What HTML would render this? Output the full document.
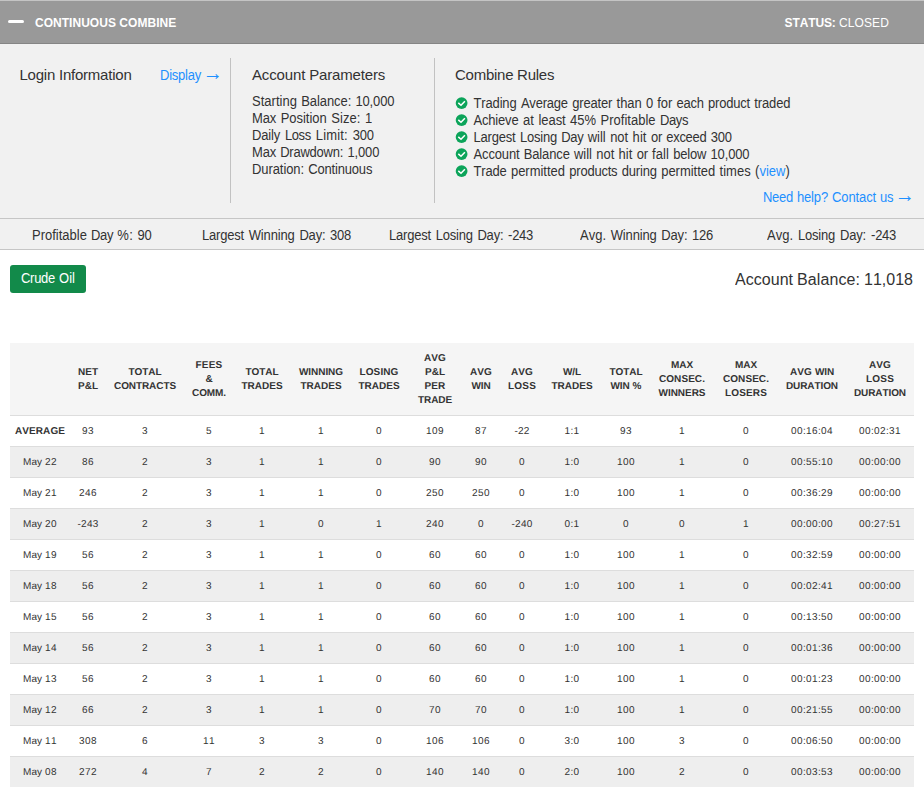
<!DOCTYPE html>
<html lang="en">
<head>
<meta charset="utf-8">
<title>Continuous Combine</title>
<style>
html,body{margin:0;padding:0;background:#fff;}
body{font-kerning:none;width:924px;height:806px;overflow:hidden;position:relative;font-family:"Liberation Sans",sans-serif;color:#333;}
.bar{position:absolute;left:0;top:0;width:924px;height:42px;background:#999;border-top:1px solid #c4c4c4;border-bottom:1px solid #858585;}
.bar .minus{position:absolute;left:8px;top:19px;width:16px;height:3px;border-radius:2px;background:#fff;}
.bar .title{position:absolute;left:35px;top:1px;line-height:42px;font-size:12px;font-weight:bold;color:#fff;}
.bar .status{position:absolute;right:35px;top:1px;line-height:42px;font-size:12px;color:#fff;}
.bar .status b{font-weight:bold;}
.info{position:absolute;left:0;top:44px;width:924px;height:174px;background:#f1f1f1;border-bottom:1px solid #c6c6c6;}
.stats{position:absolute;left:0;top:219px;width:924px;height:30px;background:#f1f1f1;border-bottom:1px solid #c6c6c6;}
.stats > span{top:7.6px;}
.vline{position:absolute;top:14px;width:1px;height:145px;background:#c2c2c2;}
h3{position:absolute;margin:0;font-weight:normal;font-size:15px;line-height:18px;color:#333;white-space:nowrap;}
a{color:#1e90ff;text-decoration:none;}
.arr{font-size:20px;line-height:0;position:relative;top:0.3px;margin-left:-2px;}
.lines{position:absolute;}
.ln{position:absolute;left:0;font-size:13px;line-height:15px;white-space:nowrap;transform:scaleY(1.075);transform-origin:0 0;}
.rules .ln{left:18.5px;}
.chks{position:absolute;left:455px;top:51px;}
.chk{position:absolute;left:0;width:13px;height:14px;}
.btn{position:absolute;left:10px;top:265px;width:76px;height:28px;line-height:27px;background:#128a4a;color:#fff;border-radius:3px;text-align:center;font-size:13px;}
.bal{position:absolute;right:11px;top:269px;font-size:16px;line-height:22px;white-space:nowrap;transform:scaleY(1.04);transform-origin:0 16px;word-spacing:-0.45px;}
.btn span{display:inline-block;transform:scaleY(1.075);transform-origin:0 18px;word-spacing:0.39px;}
table{text-rendering:geometricPrecision;position:absolute;left:10px;top:343px;border-collapse:collapse;table-layout:fixed;width:904px;}
th{background:#f5f5f5;font-size:10px;line-height:14px;word-spacing:0.22px;font-weight:bold;color:#333;height:70px;padding:2px 0 0 0;text-align:center;vertical-align:middle;}
td{font-size:10px;height:30px;padding:0;text-align:center;vertical-align:middle;border-top:1px solid #ddd;color:#333;}
th:last-child,td:last-child{padding-left:4px;}
tr.odd td{background:#eee;}
tr.avg td:first-child{font-weight:bold;}
</style>
</head>
<body>
<div class="bar">
  <div class="minus"></div>
  <div class="title"><span style="letter-spacing:0.03px">CONTINUOUS</span> <span style="letter-spacing:0.05px">COMBINE</span></div>
  <div class="status"><b style="letter-spacing:-0.14px;margin-left:1px">STATUS:</b> <span style="letter-spacing:0.11px">CLOSED</span></div>
</div>
<div class="info">
  <h3 style="left:19.5px;top:22px;letter-spacing:-0.23px;">Login Information</h3>
  <a class="ln" style="left:160px;top:23.1px;" href="#"><span style="letter-spacing:-0.23px">Display</span> <span class="arr">&rarr;</span></a>
  <div class="vline" style="left:230px;"></div>
  <h3 style="left:252px;top:22px;letter-spacing:-0.15px;">Account Parameters</h3>
  <div class="lines" style="left:252px;top:49px;">
    <div class="ln" id="p0" style="top:0.1px;word-spacing:0.59px"><span style="letter-spacing:0.02px">Starting</span> <span style="letter-spacing:-0.07px">Balance:</span> <span style="letter-spacing:-0.13px">10,000</span></div>
    <div class="ln" id="p1" style="top:17.1px;word-spacing:1.06px"><span style="letter-spacing:-0.19px">Max</span> <span style="letter-spacing:-0.03px">Position</span> Size: <span style="letter-spacing:-0.23px">1</span></div>
    <div class="ln" id="p2" style="top:34.1px;word-spacing:1.26px"><span style="letter-spacing:-0.18px">Daily</span> <span style="letter-spacing:-0.36px">Loss</span> <span style="letter-spacing:0.16px">Limit:</span> <span style="letter-spacing:-0.23px">300</span></div>
    <div class="ln" id="p3" style="top:51.1px;word-spacing:0.59px"><span style="letter-spacing:-0.19px">Max</span> <span style="letter-spacing:-0.23px">Drawdown:</span> <span style="letter-spacing:-0.11px">1,000</span></div>
    <div class="ln" id="p4" style="top:68.1px;word-spacing:0.59px"><span style="letter-spacing:-0.08px">Duration:</span> <span style="letter-spacing:-0.18px">Continuous</span></div>
  </div>
  <div class="vline" style="left:434px;"></div>
  <h3 style="left:455px;top:22px;letter-spacing:-0.26px;">Combine Rules</h3>
  <div class="chks"><svg class="chk" style="top:1.0px" viewBox="0 0 13 14"><circle cx="6.6" cy="7.05" r="5.9" fill="#0ca45a"/><path d="M3.3 6.85 L6 9.25 L9.9 5.15" fill="none" stroke="#fff" stroke-width="1.5"/></svg><svg class="chk" style="top:18.0px" viewBox="0 0 13 14"><circle cx="6.6" cy="7.05" r="5.9" fill="#0ca45a"/><path d="M3.3 6.85 L6 9.25 L9.9 5.15" fill="none" stroke="#fff" stroke-width="1.5"/></svg><svg class="chk" style="top:35.0px" viewBox="0 0 13 14"><circle cx="6.6" cy="7.05" r="5.9" fill="#0ca45a"/><path d="M3.3 6.85 L6 9.25 L9.9 5.15" fill="none" stroke="#fff" stroke-width="1.5"/></svg><svg class="chk" style="top:52.0px" viewBox="0 0 13 14"><circle cx="6.6" cy="7.05" r="5.9" fill="#0ca45a"/><path d="M3.3 6.85 L6 9.25 L9.9 5.15" fill="none" stroke="#fff" stroke-width="1.5"/></svg><svg class="chk" style="top:69.0px" viewBox="0 0 13 14"><circle cx="6.6" cy="7.05" r="5.9" fill="#0ca45a"/><path d="M3.3 6.85 L6 9.25 L9.9 5.15" fill="none" stroke="#fff" stroke-width="1.5"/></svg></div>
  <div class="lines rules" style="left:455px;top:51px;">
    <div class="ln" id="r0" style="top:0.1px;word-spacing:0.72px"><span style="letter-spacing:-0.15px">Trading</span> <span style="letter-spacing:-0.20px">Average</span> <span style="letter-spacing:-0.17px">greater</span> <span style="letter-spacing:-0.08px">than</span> <span style="letter-spacing:-0.23px">0</span> <span style="letter-spacing:-0.06px">for</span> <span style="letter-spacing:-0.30px">each</span> <span style="letter-spacing:-0.19px">product</span> <span style="letter-spacing:-0.14px">traded</span></div>
    <div class="ln" id="r1" style="top:17.1px;word-spacing:0.89px"><span style="letter-spacing:-0.18px">Achieve</span> <span style="letter-spacing:0.08px">at</span> <span style="letter-spacing:-0.09px">least</span> 45% Profitable <span style="letter-spacing:-0.40px">Days</span></div>
    <div class="ln" id="r2" style="top:34.1px;word-spacing:0.77px"><span style="letter-spacing:-0.19px">Largest</span> <span style="letter-spacing:-0.22px">Losing</span> <span style="letter-spacing:-0.37px">Day</span> will <span style="letter-spacing:-0.02px">not</span> <span style="letter-spacing:0.09px">hit</span> <span style="letter-spacing:-0.28px">or</span> <span style="letter-spacing:-0.32px">exceed</span> <span style="letter-spacing:-0.23px">300</span></div>
    <div class="ln" id="r3" style="top:51.1px;word-spacing:0.61px"><span style="letter-spacing:-0.14px">Account</span> <span style="letter-spacing:-0.14px">Balance</span> will <span style="letter-spacing:-0.02px">not</span> <span style="letter-spacing:0.09px">hit</span> <span style="letter-spacing:-0.28px">or</span> <span style="letter-spacing:0.10px">fall</span> <span style="letter-spacing:-0.19px">below</span> <span style="letter-spacing:-0.13px">10,000</span></div>
    <div class="ln" id="r4" style="top:68.1px;word-spacing:0.78px"><span style="letter-spacing:-0.19px">Trade</span> <span style="letter-spacing:-0.02px">permitted</span> <span style="letter-spacing:-0.23px">products</span> <span style="letter-spacing:-0.19px">during</span> <span style="letter-spacing:-0.02px">permitted</span> times (<a href="#">view</a>)</div>
  </div>
  <a class="ln" style="left:auto;right:9.3px;top:145.1px;" href="#"><span style="word-spacing:0.39px"><span style="letter-spacing:-0.27px">Need</span> <span style="letter-spacing:-0.16px">help?</span> <span style="letter-spacing:-0.11px">Contact</span> <span style="letter-spacing:-0.36px">us</span></span> <span class="arr">&rarr;</span></a>
</div>
<div class="stats">
  <span class="ln" id="s0" style="left:32px;word-spacing:0.56px">Profitable <span style="letter-spacing:-0.37px">Day</span> <span style="letter-spacing:0.41px">%:</span> <span style="letter-spacing:-0.23px">90</span></span>
  <span class="ln" id="s1" style="left:202px;word-spacing:1.06px"><span style="letter-spacing:-0.19px">Largest</span> <span style="letter-spacing:-0.14px">Winning</span> <span style="letter-spacing:-0.18px">Day:</span> <span style="letter-spacing:-0.23px">308</span></span>
  <span class="ln" id="s2" style="left:389px;word-spacing:1.06px"><span style="letter-spacing:-0.19px">Largest</span> <span style="letter-spacing:-0.22px">Losing</span> <span style="letter-spacing:-0.18px">Day:</span> <span style="letter-spacing:-0.25px">-243</span></span>
  <span class="ln" id="s3" style="left:580px;word-spacing:1.06px">Avg. <span style="letter-spacing:-0.14px">Winning</span> <span style="letter-spacing:-0.18px">Day:</span> <span style="letter-spacing:-0.23px">126</span></span>
  <span class="ln" id="s4" style="left:767px;word-spacing:1.39px">Avg. <span style="letter-spacing:-0.22px">Losing</span> <span style="letter-spacing:-0.18px">Day:</span> <span style="letter-spacing:-0.25px">-243</span></span>
</div>
<div class="btn"><span><span style="letter-spacing:-0.28px">Crude</span> <span style="letter-spacing:0.04px">Oil</span></span></div>
<div class="bal"><span style="letter-spacing:0.03px">Account</span> <span style="letter-spacing:0.09px">Balance:</span> 11,018</div>
<table>
<colgroup><col style="width:60px"><col style="width:36px"><col style="width:78px"><col style="width:50px"><col style="width:56px"><col style="width:62px"><col style="width:54px"><col style="width:58px"><col style="width:34px"><col style="width:48px"><col style="width:52px"><col style="width:56px"><col style="width:56px"><col style="width:72px"><col style="width:60px"><col style="width:72px"></colgroup>
<thead><tr><th></th><th>NET<br>P&amp;L</th><th><span style="letter-spacing:-0.07px">TOTAL</span><br><span style="letter-spacing:-0.09px">CONTRACTS</span></th><th><span style="letter-spacing:0.22px">FEES</span><br><span style="letter-spacing:-0.22px">&amp;</span><br><span style="letter-spacing:-0.09px">COMM.</span></th><th><span style="letter-spacing:-0.07px">TOTAL</span><br>TRADES</th><th><span style="letter-spacing:-0.06px">WINNING</span><br>TRADES</th><th><span style="letter-spacing:0.11px">LOSING</span><br>TRADES</th><th><span style="letter-spacing:0.11px">AVG</span><br>P&amp;L<br><span style="letter-spacing:0.15px">PER</span><br><span style="letter-spacing:-0.09px">TRADE</span></th><th><span style="letter-spacing:0.11px">AVG</span><br><span style="letter-spacing:-0.15px">WIN</span></th><th><span style="letter-spacing:0.11px">AVG</span><br><span style="letter-spacing:0.19px">LOSS</span></th><th><span style="letter-spacing:-0.11px">W/L</span><br>TRADES</th><th><span style="letter-spacing:-0.07px">TOTAL</span><br><span style="letter-spacing:-0.15px">WIN</span> <span style="letter-spacing:0.11px">%</span></th><th><span style="letter-spacing:-0.07px">MAX</span><br><span style="letter-spacing:0.06px">CONSEC.</span><br><span style="letter-spacing:-0.03px">WINNERS</span></th><th><span style="letter-spacing:-0.07px">MAX</span><br><span style="letter-spacing:0.06px">CONSEC.</span><br><span style="letter-spacing:0.15px">LOSERS</span></th><th><span style="letter-spacing:0.11px">AVG</span> <span style="letter-spacing:-0.15px">WIN</span><br><span style="letter-spacing:-0.10px">DURATION</span></th><th><span style="letter-spacing:0.11px">AVG</span><br><span style="letter-spacing:0.19px">LOSS</span><br><span style="letter-spacing:-0.10px">DURATION</span></th></tr></thead>
<tbody>
<tr class="avg"><td><span style="letter-spacing:0.08px">AVERAGE</span></td><td><span style="letter-spacing:0.44px">93</span></td><td><span style="letter-spacing:0.44px">3</span></td><td><span style="letter-spacing:0.44px">5</span></td><td><span style="letter-spacing:0.44px">1</span></td><td><span style="letter-spacing:0.44px">1</span></td><td><span style="letter-spacing:0.44px">0</span></td><td><span style="letter-spacing:0.44px">109</span></td><td><span style="letter-spacing:0.44px">87</span></td><td><span style="letter-spacing:0.18px">-22</span></td><td><span style="letter-spacing:0.37px">1:1</span></td><td><span style="letter-spacing:0.44px">93</span></td><td><span style="letter-spacing:0.44px">1</span></td><td><span style="letter-spacing:0.44px">0</span></td><td><span style="letter-spacing:0.38px">00:16:04</span></td><td><span style="letter-spacing:0.38px">00:02:31</span></td></tr>
<tr class="odd"><td><span style="letter-spacing:0.04px">May</span> <span style="letter-spacing:0.44px">22</span></td><td><span style="letter-spacing:0.44px">86</span></td><td><span style="letter-spacing:0.44px">2</span></td><td><span style="letter-spacing:0.44px">3</span></td><td><span style="letter-spacing:0.44px">1</span></td><td><span style="letter-spacing:0.44px">1</span></td><td><span style="letter-spacing:0.44px">0</span></td><td><span style="letter-spacing:0.44px">90</span></td><td><span style="letter-spacing:0.44px">90</span></td><td><span style="letter-spacing:0.44px">0</span></td><td><span style="letter-spacing:0.37px">1:0</span></td><td><span style="letter-spacing:0.44px">100</span></td><td><span style="letter-spacing:0.44px">1</span></td><td><span style="letter-spacing:0.44px">0</span></td><td><span style="letter-spacing:0.38px">00:55:10</span></td><td><span style="letter-spacing:0.38px">00:00:00</span></td></tr>
<tr class="even"><td><span style="letter-spacing:0.04px">May</span> <span style="letter-spacing:0.44px">21</span></td><td><span style="letter-spacing:0.44px">246</span></td><td><span style="letter-spacing:0.44px">2</span></td><td><span style="letter-spacing:0.44px">3</span></td><td><span style="letter-spacing:0.44px">1</span></td><td><span style="letter-spacing:0.44px">1</span></td><td><span style="letter-spacing:0.44px">0</span></td><td><span style="letter-spacing:0.44px">250</span></td><td><span style="letter-spacing:0.44px">250</span></td><td><span style="letter-spacing:0.44px">0</span></td><td><span style="letter-spacing:0.37px">1:0</span></td><td><span style="letter-spacing:0.44px">100</span></td><td><span style="letter-spacing:0.44px">1</span></td><td><span style="letter-spacing:0.44px">0</span></td><td><span style="letter-spacing:0.38px">00:36:29</span></td><td><span style="letter-spacing:0.38px">00:00:00</span></td></tr>
<tr class="odd"><td><span style="letter-spacing:0.04px">May</span> <span style="letter-spacing:0.44px">20</span></td><td><span style="letter-spacing:0.25px">-243</span></td><td><span style="letter-spacing:0.44px">2</span></td><td><span style="letter-spacing:0.44px">3</span></td><td><span style="letter-spacing:0.44px">1</span></td><td><span style="letter-spacing:0.44px">0</span></td><td><span style="letter-spacing:0.44px">1</span></td><td><span style="letter-spacing:0.44px">240</span></td><td><span style="letter-spacing:0.44px">0</span></td><td><span style="letter-spacing:0.25px">-240</span></td><td><span style="letter-spacing:0.37px">0:1</span></td><td><span style="letter-spacing:0.44px">0</span></td><td><span style="letter-spacing:0.44px">0</span></td><td><span style="letter-spacing:0.44px">1</span></td><td><span style="letter-spacing:0.38px">00:00:00</span></td><td><span style="letter-spacing:0.38px">00:27:51</span></td></tr>
<tr class="even"><td><span style="letter-spacing:0.04px">May</span> <span style="letter-spacing:0.44px">19</span></td><td><span style="letter-spacing:0.44px">56</span></td><td><span style="letter-spacing:0.44px">2</span></td><td><span style="letter-spacing:0.44px">3</span></td><td><span style="letter-spacing:0.44px">1</span></td><td><span style="letter-spacing:0.44px">1</span></td><td><span style="letter-spacing:0.44px">0</span></td><td><span style="letter-spacing:0.44px">60</span></td><td><span style="letter-spacing:0.44px">60</span></td><td><span style="letter-spacing:0.44px">0</span></td><td><span style="letter-spacing:0.37px">1:0</span></td><td><span style="letter-spacing:0.44px">100</span></td><td><span style="letter-spacing:0.44px">1</span></td><td><span style="letter-spacing:0.44px">0</span></td><td><span style="letter-spacing:0.38px">00:32:59</span></td><td><span style="letter-spacing:0.38px">00:00:00</span></td></tr>
<tr class="odd"><td><span style="letter-spacing:0.04px">May</span> <span style="letter-spacing:0.44px">18</span></td><td><span style="letter-spacing:0.44px">56</span></td><td><span style="letter-spacing:0.44px">2</span></td><td><span style="letter-spacing:0.44px">3</span></td><td><span style="letter-spacing:0.44px">1</span></td><td><span style="letter-spacing:0.44px">1</span></td><td><span style="letter-spacing:0.44px">0</span></td><td><span style="letter-spacing:0.44px">60</span></td><td><span style="letter-spacing:0.44px">60</span></td><td><span style="letter-spacing:0.44px">0</span></td><td><span style="letter-spacing:0.37px">1:0</span></td><td><span style="letter-spacing:0.44px">100</span></td><td><span style="letter-spacing:0.44px">1</span></td><td><span style="letter-spacing:0.44px">0</span></td><td><span style="letter-spacing:0.38px">00:02:41</span></td><td><span style="letter-spacing:0.38px">00:00:00</span></td></tr>
<tr class="even"><td><span style="letter-spacing:0.04px">May</span> <span style="letter-spacing:0.44px">15</span></td><td><span style="letter-spacing:0.44px">56</span></td><td><span style="letter-spacing:0.44px">2</span></td><td><span style="letter-spacing:0.44px">3</span></td><td><span style="letter-spacing:0.44px">1</span></td><td><span style="letter-spacing:0.44px">1</span></td><td><span style="letter-spacing:0.44px">0</span></td><td><span style="letter-spacing:0.44px">60</span></td><td><span style="letter-spacing:0.44px">60</span></td><td><span style="letter-spacing:0.44px">0</span></td><td><span style="letter-spacing:0.37px">1:0</span></td><td><span style="letter-spacing:0.44px">100</span></td><td><span style="letter-spacing:0.44px">1</span></td><td><span style="letter-spacing:0.44px">0</span></td><td><span style="letter-spacing:0.38px">00:13:50</span></td><td><span style="letter-spacing:0.38px">00:00:00</span></td></tr>
<tr class="odd"><td><span style="letter-spacing:0.04px">May</span> <span style="letter-spacing:0.44px">14</span></td><td><span style="letter-spacing:0.44px">56</span></td><td><span style="letter-spacing:0.44px">2</span></td><td><span style="letter-spacing:0.44px">3</span></td><td><span style="letter-spacing:0.44px">1</span></td><td><span style="letter-spacing:0.44px">1</span></td><td><span style="letter-spacing:0.44px">0</span></td><td><span style="letter-spacing:0.44px">60</span></td><td><span style="letter-spacing:0.44px">60</span></td><td><span style="letter-spacing:0.44px">0</span></td><td><span style="letter-spacing:0.37px">1:0</span></td><td><span style="letter-spacing:0.44px">100</span></td><td><span style="letter-spacing:0.44px">1</span></td><td><span style="letter-spacing:0.44px">0</span></td><td><span style="letter-spacing:0.38px">00:01:36</span></td><td><span style="letter-spacing:0.38px">00:00:00</span></td></tr>
<tr class="even"><td><span style="letter-spacing:0.04px">May</span> <span style="letter-spacing:0.44px">13</span></td><td><span style="letter-spacing:0.44px">56</span></td><td><span style="letter-spacing:0.44px">2</span></td><td><span style="letter-spacing:0.44px">3</span></td><td><span style="letter-spacing:0.44px">1</span></td><td><span style="letter-spacing:0.44px">1</span></td><td><span style="letter-spacing:0.44px">0</span></td><td><span style="letter-spacing:0.44px">60</span></td><td><span style="letter-spacing:0.44px">60</span></td><td><span style="letter-spacing:0.44px">0</span></td><td><span style="letter-spacing:0.37px">1:0</span></td><td><span style="letter-spacing:0.44px">100</span></td><td><span style="letter-spacing:0.44px">1</span></td><td><span style="letter-spacing:0.44px">0</span></td><td><span style="letter-spacing:0.38px">00:01:23</span></td><td><span style="letter-spacing:0.38px">00:00:00</span></td></tr>
<tr class="odd"><td><span style="letter-spacing:0.04px">May</span> <span style="letter-spacing:0.44px">12</span></td><td><span style="letter-spacing:0.44px">66</span></td><td><span style="letter-spacing:0.44px">2</span></td><td><span style="letter-spacing:0.44px">3</span></td><td><span style="letter-spacing:0.44px">1</span></td><td><span style="letter-spacing:0.44px">1</span></td><td><span style="letter-spacing:0.44px">0</span></td><td><span style="letter-spacing:0.44px">70</span></td><td><span style="letter-spacing:0.44px">70</span></td><td><span style="letter-spacing:0.44px">0</span></td><td><span style="letter-spacing:0.37px">1:0</span></td><td><span style="letter-spacing:0.44px">100</span></td><td><span style="letter-spacing:0.44px">1</span></td><td><span style="letter-spacing:0.44px">0</span></td><td><span style="letter-spacing:0.38px">00:21:55</span></td><td><span style="letter-spacing:0.38px">00:00:00</span></td></tr>
<tr class="even"><td><span style="letter-spacing:0.04px">May</span> <span style="letter-spacing:0.44px">11</span></td><td><span style="letter-spacing:0.44px">308</span></td><td><span style="letter-spacing:0.44px">6</span></td><td><span style="letter-spacing:0.44px">11</span></td><td><span style="letter-spacing:0.44px">3</span></td><td><span style="letter-spacing:0.44px">3</span></td><td><span style="letter-spacing:0.44px">0</span></td><td><span style="letter-spacing:0.44px">106</span></td><td><span style="letter-spacing:0.44px">106</span></td><td><span style="letter-spacing:0.44px">0</span></td><td><span style="letter-spacing:0.37px">3:0</span></td><td><span style="letter-spacing:0.44px">100</span></td><td><span style="letter-spacing:0.44px">3</span></td><td><span style="letter-spacing:0.44px">0</span></td><td><span style="letter-spacing:0.38px">00:06:50</span></td><td><span style="letter-spacing:0.38px">00:00:00</span></td></tr>
<tr class="odd"><td><span style="letter-spacing:0.04px">May</span> <span style="letter-spacing:0.44px">08</span></td><td><span style="letter-spacing:0.44px">272</span></td><td><span style="letter-spacing:0.44px">4</span></td><td><span style="letter-spacing:0.44px">7</span></td><td><span style="letter-spacing:0.44px">2</span></td><td><span style="letter-spacing:0.44px">2</span></td><td><span style="letter-spacing:0.44px">0</span></td><td><span style="letter-spacing:0.44px">140</span></td><td><span style="letter-spacing:0.44px">140</span></td><td><span style="letter-spacing:0.44px">0</span></td><td><span style="letter-spacing:0.37px">2:0</span></td><td><span style="letter-spacing:0.44px">100</span></td><td><span style="letter-spacing:0.44px">2</span></td><td><span style="letter-spacing:0.44px">0</span></td><td><span style="letter-spacing:0.38px">00:03:53</span></td><td><span style="letter-spacing:0.38px">00:00:00</span></td></tr>
</tbody>
</table>
</body>
</html>
